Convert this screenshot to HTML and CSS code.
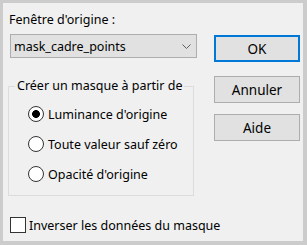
FILE: index.html
```html
<!DOCTYPE html>
<html>
<head>
    <title>Masque à partir d'une image</title>
    <link rel="stylesheet" href="styles.css">
</head>
<body>
    <div class="dialog">
        <div class="left-col">
            <label class="field-label" for="source">Fenêtre d'origine :</label>
            <div class="combo" id="source">
                <span>mask_cadre_points</span>
                <svg class="chevron" width="9" height="5" viewBox="0 0 9 5">
                    <polyline points="0.5,0.5 4.5,4.5 8.5,0.5" fill="none" stroke="#606060" stroke-width="1"/>
                </svg>
            </div>
            <fieldset class="group">
                <legend>Créer un masque à partir de</legend>
                <div class="radio-list">
                    <label class="radio-row"><input type="radio" name="mode" checked><span>Luminance d'origine</span></label>
                    <label class="radio-row"><input type="radio" name="mode"><span>Toute valeur sauf zéro</span></label>
                    <label class="radio-row"><input type="radio" name="mode"><span>Opacité d'origine</span></label>
                </div>
            </fieldset>
            <label class="check-row"><input type="checkbox"><span>Inverser les données du masque</span></label>
        </div>
        <div class="right-col">
            <button class="btn btn-default">OK</button>
            <button class="btn btn-cancel">Annuler</button>
            <button class="btn btn-help">Aide</button>
        </div>
    </div>
</body>
</html>
```

FILE: styles.css
```css
* {
    margin: 0;
    padding: 0;
    box-sizing: border-box;
}

body {
    font-family: "Noto Sans", sans-serif;
    font-size: 12.5px;
    color: #000;
    background: #cccccc;
    width: 307px;
    height: 245px;
    padding: 3px 4px 4px 3px;
    overflow: hidden;
}

.dialog {
    display: flex;
    height: 238px;
    background: #f0f0f0;
}

.left-col {
    width: 194px;
    padding: 8px 0 0 5px;
    display: flex;
    flex-direction: column;
}

.field-label {
    display: block;
    margin-left: 1px;
    line-height: 18px;
}

.combo {
    width: 187px;
    height: 24px;
    margin: 5px 0 0 2px;
    padding: 0 5px 0 3px;
    border: 1px solid #adadad;
    background: #e1e1e1;
    display: flex;
    align-items: center;
    justify-content: space-between;
}

.chevron {
    display: block;
}

.group {
    width: 186px;
    margin-top: 19px;
    padding: 0 0 6px 6px;
    border: 1px solid #dcdcdc;
}

.group legend {
    padding: 0 2px;
    line-height: 18px;
}

.radio-list {
    margin: 4px 0 0 13px;
}

.radio-row {
    display: flex;
    align-items: center;
    height: 30px;
    gap: 4px;
}

.radio-row input {
    appearance: none;
    width: 16px;
    height: 16px;
    border: 1px solid #333;
    border-radius: 50%;
    background: #fff;
}

.radio-row input:checked {
    background: radial-gradient(circle, #000 0 3.6px, #fff 4.2px);
}

.check-row {
    display: flex;
    align-items: center;
    height: 18px;
    margin: 20px 0 0 2px;
    gap: 3px;
    white-space: nowrap;
}

.check-row input {
    appearance: none;
    flex-shrink: 0;
    width: 16px;
    height: 16px;
    border: 1px solid #333;
    background: #fff;
}

.right-col {
    margin-left: 17px;
    padding-top: 32px;
    display: flex;
    flex-direction: column;
}

.btn {
    width: 86px;
    height: 27px;
    border: 1px solid #adadad;
    background: #e1e1e1;
    font-family: inherit;
    font-size: 13.5px;
    color: #000;
}

.btn-default {
    border: 2px solid #0078d7;
}

.btn-cancel {
    margin-top: 14px;
}

.btn-help {
    margin-top: 11px;
}
```
